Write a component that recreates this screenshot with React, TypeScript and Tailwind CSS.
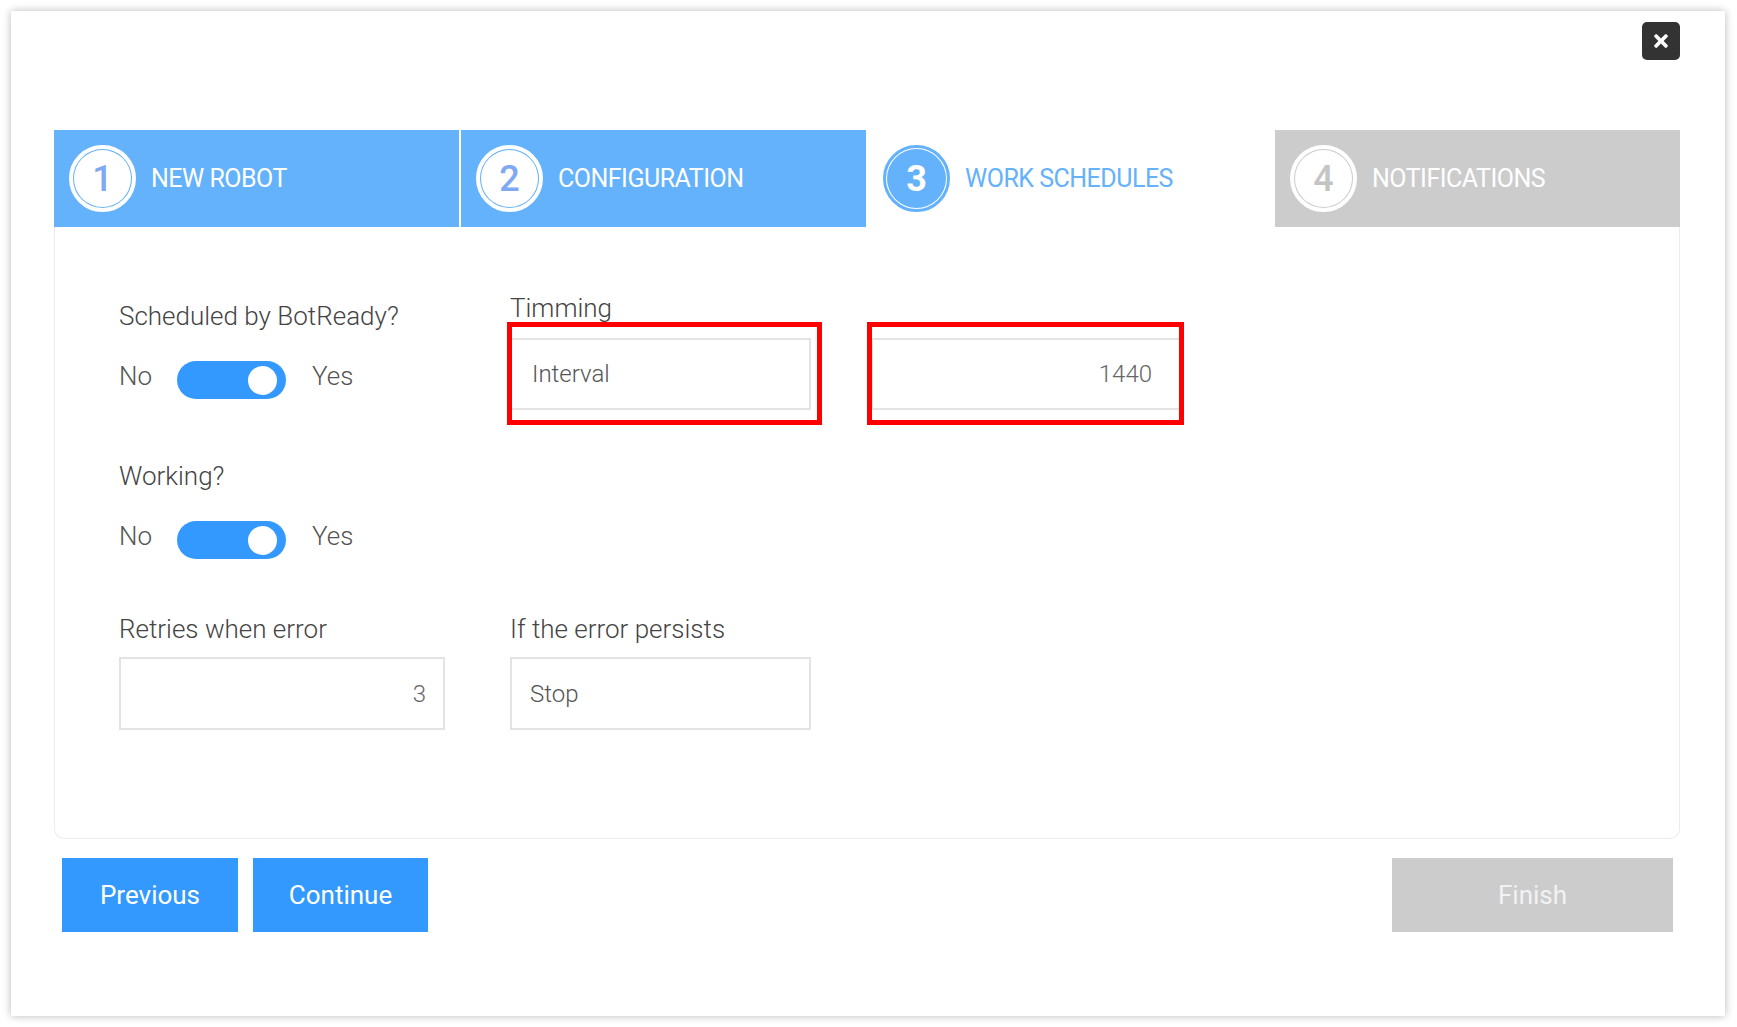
import React from "react";
import { FaTimes } from "react-icons/fa";

// 向导步骤
type StepState = "done" | "active" | "pending";

const steps: { n: number; label: string; state: StepState }[] = [
  { n: 1, label: "NEW ROBOT", state: "done" },
  { n: 2, label: "CONFIGURATION", state: "done" },
  { n: 3, label: "WORK SCHEDULES", state: "active" },
  { n: 4, label: "NOTIFICATIONS", state: "pending" },
];

const StepCircle = ({ n, state }: { n: number; state: StepState }) => {
  if (state === "active") {
    return (
      <div className="w-[67px] h-[67px] rounded-full border-[3px] border-[#64b1fc] p-[1px] bg-white shrink-0">
        <div className="w-full h-full rounded-full bg-[#64b1fc] flex items-center justify-center text-white text-[36px] font-bold leading-none">
          {n}
        </div>
      </div>
    );
  }
  const numColor = state === "done" ? "text-[#7fa9f4]" : "text-[#c4c4c4]";
  return (
    <div className="w-[67px] h-[67px] rounded-full border-[4px] border-white p-[1px] shrink-0">
      <div className={`w-full h-full rounded-full bg-white flex items-center justify-center text-[36px] font-medium leading-none ${numColor}`}>
        {n}
      </div>
    </div>
  );
};

const Step = ({ n, label, state }: { n: number; label: string; state: StepState }) => {
  const bg = state === "done" ? "bg-[#64b1fc]" : state === "active" ? "bg-white" : "bg-[#cccccc]";
  const text = state === "active" ? "text-[#64b1fc]" : "text-white";
  return (
    <div className={`flex items-center pl-[15px] ${bg}`}>
      <StepCircle n={n} state={state} />
      <span className={`ml-[15px] text-[25px] tracking-[-0.5px] ${text}`}>{label}</span>
    </div>
  );
};

const Toggle = () => (
  <div className="flex items-center h-[38px]">
    <span className="w-[58px] text-[26px] font-light text-[#555] mb-[8px]">No</span>
    <div className="w-[109px] h-[38px] rounded-full bg-[#3399ff] flex items-center justify-end pr-[9px]">
      <div className="w-[29px] h-[29px] rounded-full bg-white" />
    </div>
    <span className="ml-[26px] text-[26px] font-light text-[#555] mb-[8px]">Yes</span>
  </div>
);

const Label = ({ children }: { children: React.ReactNode }) => (
  <div className="h-[30px] leading-[30px] text-[26px] font-light text-[#444]">{children}</div>
);

export default function App() {
  return (
    <div className="min-h-screen bg-white pt-[11px] pl-[11px]" style={{ fontFamily: "Roboto, 'Liberation Sans', sans-serif" }}>
      <div className="w-[1714px] h-[1005px] bg-white shadow-[0_0_8px_rgba(0,0,0,0.28)] pl-[43px] pr-[45px]">
        {/* 关闭按钮 */}
        <div className="flex justify-end pt-[11px]">
          <button className="w-[38px] h-[38px] rounded-[5px] bg-[#333] flex items-center justify-center text-white">
            <FaTimes size={20} />
          </button>
        </div>

        {/* 步骤条 */}
        <div className="mt-[70px] grid grid-cols-4 gap-[2px] h-[97px] bg-white">
          {steps.map((s) => (
            <Step key={s.n} {...s} />
          ))}
        </div>

        {/* 表单面板 */}
        <div className="h-[612px] border border-t-0 border-[#ececec] rounded-b-[10px] pl-[64px] pt-[66px]">
          <div className="flex items-start">
            <div className="w-[391px] pt-[8px]">
              <Label>Scheduled by BotReady?</Label>
              <div className="mt-[30px]">
                <Toggle />
              </div>
            </div>
            <div className="w-[301px]">
              <Label>Timming</Label>
              <div className="relative mt-[15px]">
                <div className="h-[72px] border-2 border-[#e3e3e3] flex items-center pl-[20px] text-[24px] font-light text-[#555]">
                  Interval
                </div>
                <div className="absolute -left-[3px] -right-[11px] -top-[16px] -bottom-[15px] border-[5px] border-[#ff0000]" />
              </div>
            </div>
            <div className="ml-[60px] w-[311px] pt-[45px]">
              <div className="relative">
                <div className="h-[72px] border-2 border-[#e3e3e3] flex items-center justify-end pr-[28px] text-[24px] font-light text-[#666]">
                  1440
                </div>
                <div className="absolute -left-[4px] -right-[2px] -top-[16px] -bottom-[15px] border-[5px] border-[#ff0000]" />
              </div>
            </div>
          </div>

          <div className="mt-[51px]">
            <Label>Working?</Label>
            <div className="mt-[30px]">
              <Toggle />
            </div>
          </div>

          <div className="mt-[55px] flex items-start">
            <div className="w-[326px]">
              <Label>Retries when error</Label>
              <div className="mt-[13px] h-[73px] border-2 border-[#e3e3e3] flex items-center justify-end pr-[17px] text-[24px] font-light text-[#666]">
                3
              </div>
            </div>
            <div className="ml-[65px] w-[301px]">
              <Label>If the error persists</Label>
              <div className="mt-[13px] h-[73px] border-2 border-[#e3e3e3] flex items-center pl-[18px] text-[24px] font-light text-[#555]">
                Stop
              </div>
            </div>
          </div>
        </div>

        {/* 底部按钮 */}
        <div className="mt-[19px] flex items-center pl-[8px] pr-[7px]">
          <button className="w-[176px] h-[74px] bg-[#3399ff] text-white text-[26px]">Previous</button>
          <button className="ml-[15px] w-[175px] h-[74px] bg-[#3399ff] text-white text-[26px]">Continue</button>
          <button className="ml-auto w-[281px] h-[74px] bg-[#cccccc] text-[#f2f2f2] text-[26px]">Finish</button>
        </div>
      </div>
    </div>
  );
}
